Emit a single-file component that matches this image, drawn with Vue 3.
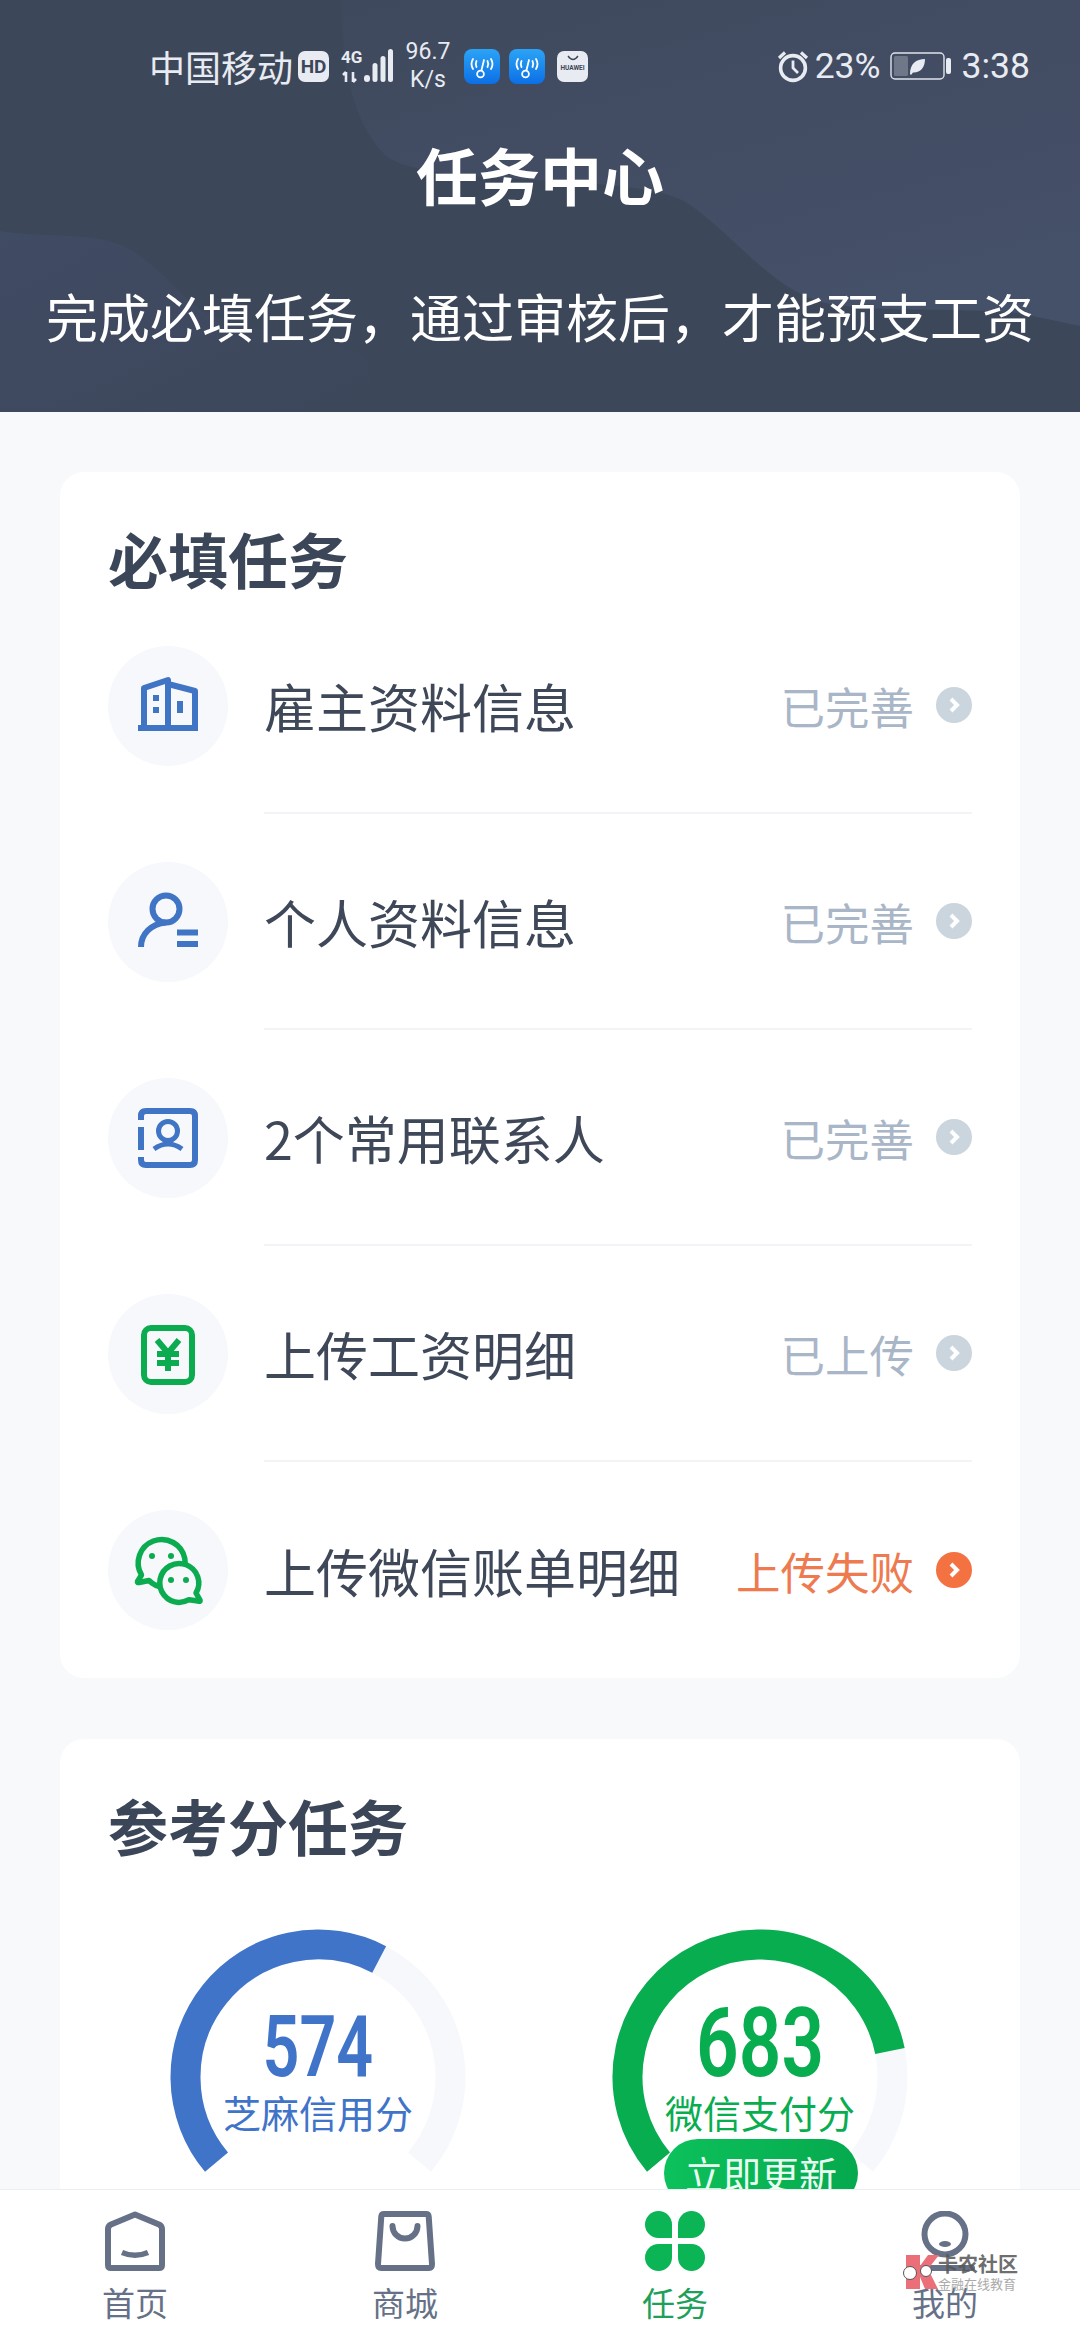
<template>
  <div class="page">
    <header class="hero">
      <svg class="hero-bg" viewBox="0 0 1080 412" preserveAspectRatio="none">
        <defs>
          <linearGradient id="shapeRight" x1="0" y1="0" x2="0.6" y2="1">
            <stop offset="0" stop-color="#3f495d" />
            <stop offset="1" stop-color="#455069" />
          </linearGradient>
          <linearGradient id="shapeLeft" x1="0" y1="0" x2="1" y2="1">
            <stop offset="0" stop-color="#404b64" />
            <stop offset="1" stop-color="#3d475a" />
          </linearGradient>
        </defs>
        <path fill="url(#shapeRight)" d="M341 0C342 60 350 120 386 156C430 190 640 170 689 204C730 232 770 285 813 299C850 316 1000 305 1033 316L1080 326V0Z" />
        <path fill="url(#shapeLeft)" d="M0 231C40 238 90 232 120 245C160 262 180 300 207 313C250 335 330 335 365 357C372 370 372 400 372 412H0Z" />
      </svg>

      <div class="status">
        <div class="status-left">
          <span class="carrier">中国移动</span>
          <span class="hd">HD</span>
          <svg class="signal" width="52" height="36" viewBox="0 0 52 36">
            <text x="0" y="15" class="net">4G</text>
            <path d="M5 34V24M5 24L2 27M12 24V34M12 34L15 31" class="arrows" />
            <rect x="23" y="27" width="6" height="7" rx="3" />
            <rect x="31.5" y="15" width="5" height="19" rx="2.5" />
            <rect x="39.5" y="8" width="5" height="26" rx="2.5" />
            <rect x="47" y="1" width="5" height="33" rx="2.5" />
          </svg>
          <span class="speed">96.7<br />K/s</span>
          <svg v-for="n in 2" :key="n" class="app" :class="{ second: n === 2 }" width="36" height="35" viewBox="0 0 36 35">
            <defs>
              <linearGradient :id="'blue' + n" x1="0" y1="0" x2="0" y2="1">
                <stop offset="0" stop-color="#2ba4f6" />
                <stop offset="1" stop-color="#0c6fe6" />
              </linearGradient>
            </defs>
            <rect width="36" height="35" rx="8" :fill="'url(#blue' + n + ')'" />
            <path d="M9 10Q6 15 9 20M12.5 12Q11 15 12.5 18M27 10Q30 15 27 20M23.5 12Q25 15 23.5 18M20 11L17.5 21" fill="none" stroke="#fff" stroke-width="1.8" stroke-linecap="round" />
            <circle cx="16.5" cy="25" r="3.4" fill="none" stroke="#fff" stroke-width="1.8" />
          </svg>
          <span class="store">
            <svg width="14" height="6" viewBox="0 0 14 6"><path d="M2 1Q7 8 12 1" fill="none" stroke="#3d475b" stroke-width="1.3" /></svg>
            <span class="store-name">HUAWEI</span>
          </span>
        </div>
        <div class="status-right">
          <svg width="34" height="34" viewBox="0 0 34 34" fill="none" stroke="#e8ebf1">
            <circle cx="17" cy="19" r="12.4" stroke-width="3.6" />
            <path d="M17 11.5V19L22 24" stroke-width="2.8" />
            <path d="M3 9L9 3.5M31 9L25 3.5" stroke-width="3.2" />
          </svg>
          <span class="percent">23%</span>
          <svg class="battery" width="62" height="28" viewBox="0 0 62 28">
            <rect x="1" y="1" width="53" height="26" rx="4" fill="none" stroke="#e0e4ea" stroke-width="1.4" />
            <rect x="4" y="4" width="14" height="20" rx="1.5" fill="#6f7888" />
            <path d="M20 22C20 12 26 7 35 7C35 16 30 21 23 20.5L21 23Z" fill="#e8ebf1" />
            <rect x="56" y="6" width="5" height="16" rx="2" fill="#e8ebf1" />
          </svg>
          <span class="clock">3:38</span>
        </div>
      </div>

      <h1 class="title">任务中心</h1>
      <p class="subtitle">完成必填任务，通过审核后，才能预支工资</p>
    </header>

    <main class="main">
      <section class="card">
        <h2 class="card-title">必填任务</h2>
        <div class="rows">
          <div v-for="row in tasks" :key="row.name" class="row">
            <svg class="row-icon" width="120" height="120" viewBox="0 0 120 120" fill="none">
              <circle cx="60" cy="60" r="60" fill="#f6f8fb" />
              <g v-if="row.icon === 'building'" stroke="#4074c4" stroke-width="6" stroke-linejoin="round">
                <path d="M30 82H90" />
                <path d="M36 80V42L60 34V80M60 38L87 45V80" />
                <path d="M45 49h6v6h-6zM45 61h6v6h-6zM69 55h6v12h-6z" fill="#4074c4" stroke="none" />
              </g>
              <g v-else-if="row.icon === 'person'" stroke="#4074c4" stroke-width="6">
                <circle cx="58" cy="47" r="13.5" />
                <path d="M33 85C33 72 43 62 58 60.5" />
                <path d="M69 70.5H90M69 82H90" />
              </g>
              <g v-else-if="row.icon === 'contact'" stroke="#4074c4" stroke-width="6">
                <path d="M33 42V38Q33 33 38 33H82Q87 33 87 38V82Q87 87 82 87H38Q33 87 33 82V79M33 49V72" />
                <circle cx="60" cy="53" r="9.5" stroke-width="5" />
                <path d="M46 71Q60 61 74 71" stroke-width="5" />
              </g>
              <g v-else-if="row.icon === 'receipt'" stroke="#0bab50" stroke-width="6">
                <rect x="36" y="34" width="48" height="54" rx="7" />
                <path d="M49 46L60 59L71 46M60 59V77M49 60H71M49 69H71" stroke-width="6" />
              </g>
              <g v-else stroke="#0bab50" stroke-width="5.5" stroke-linejoin="round">
                <path d="M33.5 65L29.5 71.5Q29 73 31 72.5L41 70.5Q47 76.5 54 76.5A23.5 23.5 0 1 0 33.5 65Z" />
                <path d="M88 83L92 90Q92.5 92 90 91L81 89.7Q76 92.5 71 92.5A19.5 19.5 0 1 1 88 83Z" fill="#f6f8fb" />
                <g fill="#0bab50" stroke="none">
                  <circle cx="44" cy="46" r="3" />
                  <circle cx="63" cy="46" r="3" />
                  <circle cx="63" cy="70" r="3" />
                  <circle cx="78" cy="70" r="3" />
                </g>
              </g>
            </svg>
            <div class="row-body">
              <span class="row-name">{{ row.name }}</span>
              <span class="row-state" :class="{ failed: row.failed }">{{ row.state }}</span>
              <svg class="chevron" width="36" height="36" viewBox="0 0 36 36">
                <circle cx="18" cy="18" r="18" :fill="row.failed ? '#f47241' : '#cbd5de'" />
                <path d="M15 12L21 18L15 24" fill="none" stroke="#fff" stroke-width="4" />
              </svg>
            </div>
          </div>
        </div>
      </section>

      <section class="card card-score">
        <h2 class="card-title">参考分任务</h2>
        <div class="gauges">
          <div v-for="g in gauges" :key="g.label" class="gauge" :class="g.kind">
            <svg class="dial" width="300" height="300" viewBox="0 0 300 300" fill="none" stroke-width="30">
              <path :d="arc(-130, 130)" stroke="#f6f8fb" />
              <path :d="arc(-130, g.end)" :stroke="g.color" />
            </svg>
            <div class="info">
              <div class="num"><span>{{ g.value }}</span></div>
              <div class="label">{{ g.label }}</div>
            </div>
            <button v-if="g.action" class="update">{{ g.action }}</button>
          </div>
        </div>
      </section>
    </main>

    <nav class="tabs">
      <div class="tab">
        <svg width="60" height="60" viewBox="0 0 60 60" fill="none" stroke="#667187" stroke-width="6" stroke-linejoin="round">
          <path d="M30 3.5L54 13.5Q57 15 57 18V54Q57 57 54 57H6Q3 57 3 54V18Q3 15 6 13.5Z" />
          <path d="M17 41.5Q30 47 43 41.5" stroke-width="5.5" />
        </svg>
        <span>首页</span>
      </div>
      <div class="tab">
        <svg width="60" height="60" viewBox="0 0 60 60" fill="none" stroke="#667187" stroke-width="6" stroke-linejoin="round">
          <path d="M9 3H51Q53.5 3 53.7 5.5L57 53Q57 57 54 57H6Q3 57 3 53L6.3 5.5Q6.5 3 9 3Z" />
          <path d="M17.5 15A12.5 12.5 0 0 0 42.5 15" stroke-linecap="round" />
        </svg>
        <span>商城</span>
      </div>
      <div class="tab active">
        <svg width="60" height="60" viewBox="0 0 60 60" fill="#0bb455">
          <path d="M27 27V13.5A13.5 13.5 0 1 0 13.5 27Z" />
          <path d="M33 27V13.5A13.5 13.5 0 1 1 46.5 27Z" />
          <path d="M27 33V46.5A13.5 13.5 0 1 1 13.5 33Z" />
          <path d="M33 33V46.5A13.5 13.5 0 1 0 46.5 33Z" />
        </svg>
        <span>任务</span>
      </div>
      <div class="tab">
        <svg width="60" height="60" viewBox="0 0 60 60" fill="none" stroke="#667187" stroke-width="6">
          <circle cx="30" cy="23" r="20.5" />
          <ellipse cx="30" cy="33" rx="6" ry="3" fill="#667187" stroke="none" />
          <path d="M3 57H57" stroke-linecap="round" />
        </svg>
        <span>我的</span>
      </div>
      <div class="mark">
        <svg width="40" height="36" viewBox="0 0 40 36">
          <path d="M5 1H19V12L27 1H38L27 15L37 35H24L19 23V35H5Z" fill="#ea6f78" />
          <circle cx="9" cy="19" r="6.5" fill="#fff" stroke="#555" stroke-width="1" />
          <circle cx="25" cy="17" r="5.5" fill="#fff" stroke="#555" stroke-width="1" />
        </svg>
        <div class="mark-text">
          <b>卡农社区</b>
          <small>金融在线教育</small>
        </div>
      </div>
    </nav>
  </div>
</template>

<script setup>
const tasks = [
  { name: "雇主资料信息", state: "已完善", icon: "building" },
  { name: "个人资料信息", state: "已完善", icon: "person" },
  { name: "2个常用联系人", state: "已完善", icon: "contact" },
  { name: "上传工资明细", state: "已上传", icon: "receipt" },
  { name: "上传微信账单明细", state: "上传失败", icon: "wechat", failed: true },
];

const gauges = [
  { value: 574, label: "芝麻信用分", end: 27.5, color: "#4074c9", kind: "blue" },
  { value: 683, label: "微信支付分", end: 78.7, color: "#08ad50", kind: "green", action: "立即更新" },
];

// angles are degrees clockwise from the top of the dial
function arc(from, to) {
  const r = 132.5;
  const pt = (a) => {
    const t = (a * Math.PI) / 180;
    return `${(150 + r * Math.sin(t)).toFixed(2)} ${(150 - r * Math.cos(t)).toFixed(2)}`;
  };
  const large = to - from > 180 ? 1 : 0;
  return `M${pt(from)}A${r} ${r} 0 ${large} 1 ${pt(to)}`;
}
</script>

<style>
body {
  margin: 0;
  background: #f7f9fb;
}
</style>

<style scoped>
.page {
  width: 1080px;
  height: 2340px;
  display: flex;
  flex-direction: column;
  overflow: hidden;
  background: #f7f9fb;
  font-family: "Noto Sans CJK SC", "Noto Sans", sans-serif;
  position: relative;
}

.hero {
  position: relative;
  height: 412px;
  flex: none;
  background: #3d475a;
  color: #fff;
  text-align: center;
}

.hero-bg {
  position: absolute;
  inset: 0;
  width: 100%;
  height: 100%;
}

.status {
  position: relative;
  height: 60px;
  padding: 36px 50px 0 149px;
  display: flex;
  justify-content: space-between;
  align-items: center;
  color: #e8ebf1;
}

.status-left,
.status-right {
  display: flex;
  align-items: center;
}

.carrier {
  font-size: 36px;
  line-height: 44px;
}

.hd {
  width: 31px;
  height: 31px;
  margin-left: 5px;
  border-radius: 7px;
  background: #e8ebf1;
  color: #3d475a;
  font: 700 19px/31px "Roboto", sans-serif;
}

.signal {
  margin-left: 12px;
  fill: #e8ebf1;
  overflow: visible;
}

.net {
  font: 700 17px "Roboto", sans-serif;
}

.arrows {
  fill: none;
  stroke: #e8ebf1;
  stroke-width: 2.6;
}

.speed {
  width: 50px;
  margin: 0 11px 0 10px;
  font: 400 23px/28px "Roboto", sans-serif;
}

.app.second {
  margin-left: 9px;
}

.store {
  width: 31px;
  height: 31px;
  margin-left: 12px;
  border-radius: 7px;
  background: #e8ebf1;
  display: flex;
  flex-direction: column;
  align-items: center;
  padding-top: 4px;
  box-sizing: border-box;
  overflow: hidden;
}

.store-name {
  font: 700 6.5px/9px "Roboto", sans-serif;
  color: #3d475a;
  margin-top: 3px;
}

.status-right {
  font: 400 35.5px/44px "Roboto", sans-serif;
}

.percent {
  margin-left: 5px;
}

.battery {
  margin-left: 9px;
}

.clock {
  margin-left: 10px;
}

.title {
  position: relative;
  margin: 38px 0 0;
  font-size: 62px;
  line-height: 80px;
  font-weight: 700;
}

.subtitle {
  position: relative;
  margin: 72px 0 0;
  font-size: 52px;
  line-height: 60px;
  white-space: nowrap;
}

.main {
  flex: 1;
  min-height: 0;
  overflow: hidden;
  padding: 60px 60px 0;
}

.card {
  background: #fff;
  border-radius: 24px;
  padding: 56px 48px 0;
}

.card-title {
  margin: 0;
  font-size: 60px;
  line-height: 60px;
  font-weight: 700;
  color: #3c4659;
}

.rows {
  margin-top: 10px;
}

.row {
  display: flex;
  align-items: center;
  height: 216px;
}

.row-icon {
  flex: none;
}

.row-body {
  flex: 1;
  height: 100%;
  margin-left: 36px;
  display: flex;
  align-items: center;
  border-bottom: 2px solid #f2f4f7;
  box-sizing: border-box;
}

.row:last-child .row-body {
  border-bottom: none;
}

.row-name {
  flex: 1;
  font-size: 52px;
  color: #3f4859;
}

.row-state {
  font-size: 44.5px;
  color: #a9b6c7;
}

.row-state.failed {
  color: #ee7a50;
}

.chevron {
  margin-left: 22px;
}

.card-score {
  margin-top: 61px;
  padding-top: 56px;
}

.gauges {
  display: flex;
  gap: 142px;
  margin: 72px 0 0 60px;
}

.gauge {
  position: relative;
  width: 300px;
  height: 300px;
  flex: none;
}

.info {
  position: absolute;
  left: 0;
  right: 0;
  top: 75px;
  text-align: center;
}

.num {
  height: 88px;
  line-height: 90px;
  font-family: "Roboto", sans-serif;
  font-weight: 600;
  font-size: 85px;
}

.num span {
  display: inline-block;
  transform: scaleX(0.76);
}

.label {
  font-size: 38px;
  line-height: 44px;
  white-space: nowrap;
}

.blue {
  color: #4074c9;
}

.green {
  color: #08ad50;
}

.green .num {
  font-size: 97px;
  line-height: 82px;
}

.green .num span {
  transform: scaleX(0.77);
}

.update {
  position: absolute;
  left: 54px;
  top: 212px;
  width: 194px;
  height: 68px;
  padding: 0;
  border: none;
  border-radius: 34px;
  background: linear-gradient(90deg, #0cc15b, #06a94e);
  color: #e9fff2;
  font: 400 38px/68px "Noto Sans CJK SC", sans-serif;
}

.tabs {
  position: relative;
  flex: none;
  height: 151px;
  box-sizing: border-box;
  display: grid;
  grid-template-columns: repeat(4, 1fr);
  padding-top: 21px;
  background: #fff;
  border-top: 1px solid #e9eef1;
}

.tab {
  display: flex;
  flex-direction: column;
  align-items: center;
  font-size: 33px;
  line-height: 40px;
  color: #667187;
}

.tab span {
  margin-top: 11px;
}

.tab.active {
  color: #1ea05a;
}

.mark {
  position: absolute;
  left: 901px;
  top: 64px;
  display: flex;
  color: #555;
}

.mark-text {
  margin-left: -3px;
  display: flex;
  flex-direction: column;
}

.mark-text b {
  font-size: 20px;
  line-height: 20px;
  font-weight: 700;
  opacity: 0.85;
}

.mark-text small {
  margin-top: 3px;
  font-size: 13px;
  line-height: 14px;
  color: #aaa;
}
</style>
